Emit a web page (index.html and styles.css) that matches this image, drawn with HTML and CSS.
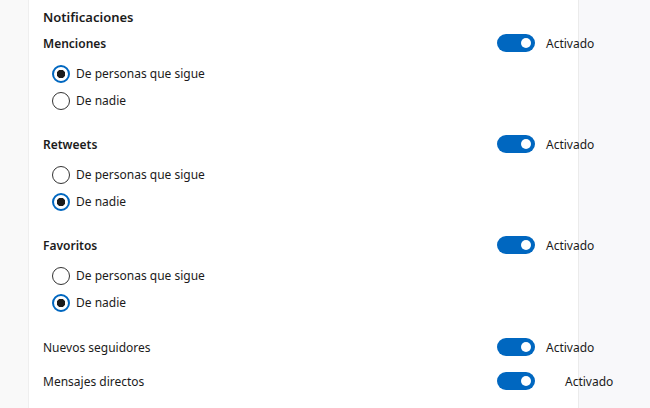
FILE: index.html
```html
<!DOCTYPE html>
<html lang="es">
<head>
  <meta charset="UTF-8">
  <title>Notificaciones</title>
  <link rel="stylesheet" href="styles.css">
</head>
<body>
  <div class="side-left"></div>
  <div class="panel">
    <h3 class="title">Notificaciones</h3>

    <div class="group">
      <div class="row">
        <span class="label bold">Menciones</span>
        <span class="switch"><span class="toggle"></span>Activado</span>
      </div>
      <div class="radio checked"><span class="dot"></span>De personas que sigue</div>
      <div class="radio"><span class="dot"></span>De nadie</div>
    </div>

    <div class="group">
      <div class="row">
        <span class="label bold">Retweets</span>
        <span class="switch"><span class="toggle"></span>Activado</span>
      </div>
      <div class="radio"><span class="dot"></span>De personas que sigue</div>
      <div class="radio checked"><span class="dot"></span>De nadie</div>
    </div>

    <div class="group">
      <div class="row">
        <span class="label bold">Favoritos</span>
        <span class="switch"><span class="toggle"></span>Activado</span>
      </div>
      <div class="radio"><span class="dot"></span>De personas que sigue</div>
      <div class="radio checked"><span class="dot"></span>De nadie</div>
    </div>

    <div class="row simple">
      <span class="label">Nuevos seguidores</span>
      <span class="switch"><span class="toggle"></span>Activado</span>
    </div>
    <div class="row simple">
      <span class="label">Mensajes directos</span>
      <span class="switch wide"><span class="toggle"></span>Activado</span>
    </div>
  </div>
  <div class="side-right"></div>
</body>
</html>
```
FILE: styles.css
```css
html, body {
  margin: 0;
  height: 100%;
}
body {
  display: flex;
  background-color: #f9f9f9;
  font-family: "Noto Sans", "Open Sans", sans-serif;
  font-size: 12px;
  color: #1b1b1b;
  overflow: hidden;
}
.side-left {
  width: 28px;
  background-color: #f9f9f9;
  border-right: 1px solid #efefef;
}
.panel {
  /* el texto "Activado" sobresale encima de la columna gris */
  position: relative;
  z-index: 1;
  width: 535px;
  padding: 6px 0 0 14px;
  background-color: #ffffff;
}
.side-right {
  flex: 1;
  background-color: #f8f8fa;
  border-left: 1px solid #ebebeb;
}
.title {
  margin: 0;
  height: 22px;
  line-height: 22px;
  font-size: 13px;
  font-weight: 600;
}
.group {
  margin-bottom: 15px;
}
.row {
  display: flex;
  align-items: center;
  height: 30px;
}
.label {
  flex-shrink: 0;
  width: 454px;
}
.bold {
  font-weight: 600;
}
.switch {
  display: flex;
  align-items: center;
  flex-shrink: 0;
  white-space: nowrap;
}
.toggle {
  position: relative;
  width: 38px;
  height: 18px;
  margin-right: 11px;
  border-radius: 9px;
  background-color: #0067c0;
}
/* bolita blanca del interruptor */
.toggle::after {
  content: "";
  position: absolute;
  right: 4px;
  top: 4px;
  width: 10px;
  height: 10px;
  border-radius: 50%;
  background-color: #ffffff;
}
.switch.wide .toggle {
  margin-right: 30px;
}
.radio {
  display: flex;
  align-items: center;
  height: 27px;
  padding-left: 9px;
}
.row + .radio {
  margin-top: 2px;
}
.dot {
  box-sizing: border-box;
  width: 18px;
  height: 18px;
  margin-right: 6px;
  border: 1.5px solid #333333;
  border-radius: 50%;
}
.radio.checked .dot {
  border: 2px solid #0067c0;
  background: radial-gradient(circle, #1b1b1b 0 4px, #ffffff 4.5px);
}
.row.simple {
  height: 34px;
}
.group + .row.simple {
  margin-top: -1px;
}
```
